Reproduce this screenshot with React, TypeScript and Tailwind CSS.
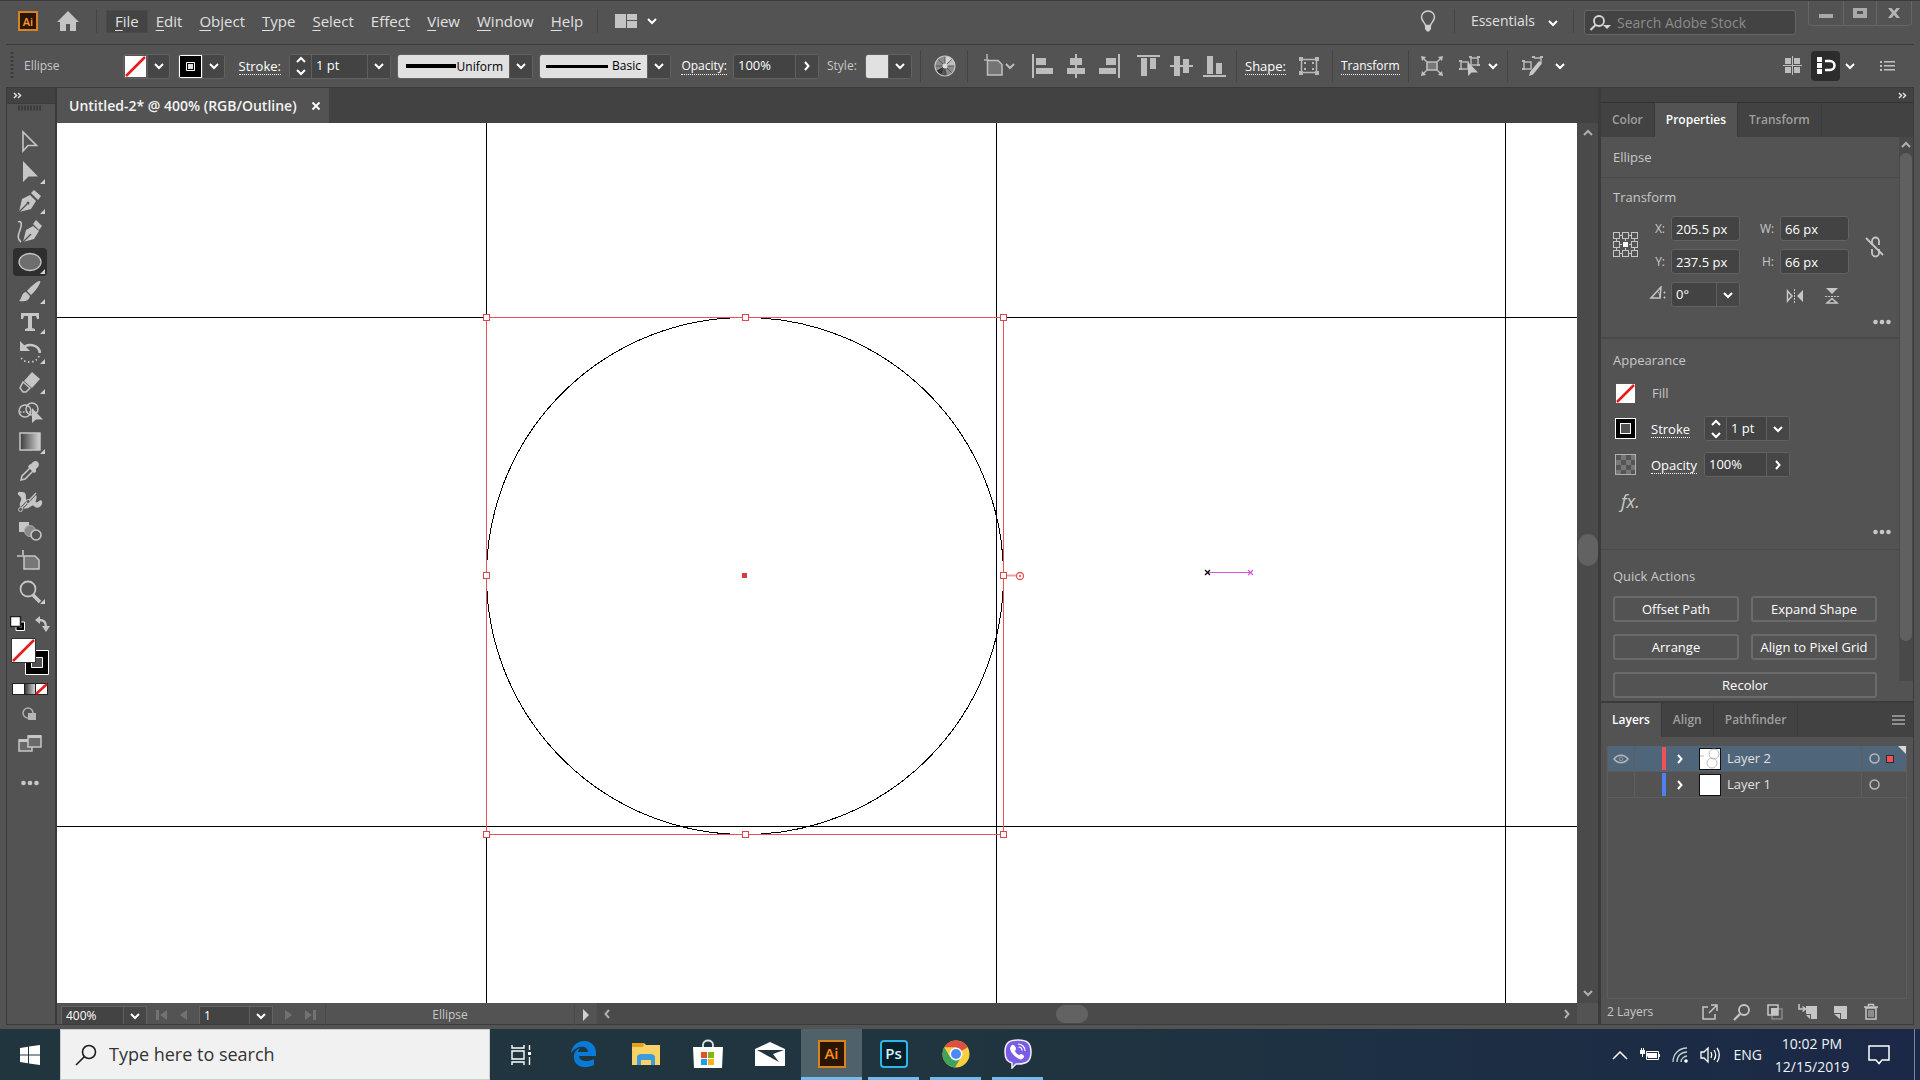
import React, { ReactNode } from "react";

const font = "font-['Open_Sans','Noto_Sans',sans-serif]";

type IconProps = { w: number; h: number; children: ReactNode; className?: string };
function Svg({ w, h, children, className = "" }: IconProps) {
  return (
    <svg width={w} height={h} viewBox={`0 0 ${w} ${h}`} fill="none" className={`shrink-0 ${className}`} aria-hidden="true">
      {children}
    </svg>
  );
}

function Down({ className = "" }: { className?: string }) {
  return (
    <Svg w={12} h={8} className={className}>
      <path d="M2 2l4 4 4-4" stroke="currentColor" strokeWidth="2" />
    </Svg>
  );
}
function Up({ className = "" }: { className?: string }) {
  return (
    <Svg w={12} h={8} className={className}>
      <path d="M2 6l4-4 4 4" stroke="currentColor" strokeWidth="2" />
    </Svg>
  );
}
function Right({ className = "" }: { className?: string }) {
  return (
    <Svg w={8} h={12} className={className}>
      <path d="M2 2l3.500 4L2 10" stroke="currentColor" strokeWidth="2" />
    </Svg>
  );
}
function Left({ className = "" }: { className?: string }) {
  return (
    <Svg w={8} h={12} className={className}>
      <path d="M6 2L2.500 6 6 10" stroke="currentColor" strokeWidth="2" />
    </Svg>
  );
}

const Sep = ({ className = "" }: { className?: string }) => <div className={`w-px shrink-0 bg-[#454545] ${className}`} />;

function DropButton({ label, children }: { label: string; children?: ReactNode }) {
  return (
    <button aria-label={label} className="flex h-full w-[23px] shrink-0 items-center justify-center border-l border-[#5f5f5f] bg-[#464646] text-white">
      {children ?? <Down />}
    </button>
  );
}

function Stepper({ label }: { label: string }) {
  return (
    <div className="flex h-full w-[22px] shrink-0 flex-col items-center justify-center gap-1 border-r border-[#5f5f5f] bg-[#464646] text-white">
      <button aria-label={`Increase ${label}`} className="h-2"><Up /></button>
      <button aria-label={`Decrease ${label}`} className="h-2"><Down /></button>
    </div>
  );
}

const field = "flex h-[25px] shrink-0 items-center overflow-hidden rounded-[3px] border border-[#626262] bg-[#434343]";

function NoneSwatch({ size }: { size: number }) {
  return (
    <Svg w={size} h={size}>
      <rect x="0.500" y="0.500" width={size - 1} height={size - 1} fill="#fff" stroke="#555" />
      <path d={`M2 ${size - 2}L${size - 2} 2`} stroke="#e31b1b" strokeWidth="2.500" />
    </Svg>
  );
}

const menus: [string, number][] = [["File", 0], ["Edit", 0], ["Object", 0], ["Type", 0], ["Select", 0], ["Effect", 4], ["View", 0], ["Window", 0], ["Help", 0]];

function MenuBar() {
  return (
    <header className="flex h-[43px] shrink-0 items-start pl-[18px] text-[#e0e0e0]">
      <div className="flex h-10 items-center">
        <div className="flex h-5 w-5 items-center justify-center border-2 border-[#d9831f] bg-[#2a1500] text-[11px] leading-none font-semibold text-[#ff9a2e]">Ai</div>
        <button aria-label="Home" className="ml-[18px]">
          <Svg w={24} h={22}>
            <path d="M12 1L1 12h3v9h6v-7h4v7h6v-9h3z" fill="#c4c4c4" />
          </Svg>
        </button>
        <Sep className="mr-2.5 ml-4 h-6" />
        <nav className="flex items-center gap-px" aria-label="Main menu">
          {menus.map(([m, i]) => (
            <button
              key={m}
              className={`h-[21px] px-2 text-[15px] leading-5 whitespace-nowrap ${m === "File" ? "bg-[#444444] outline outline-[#4a4a4a]" : ""}`}
            >
              {m.slice(0, i)}
              <span className="underline underline-offset-3">{m[i]}</span>
              {m.slice(i + 1)}
            </button>
          ))}
        </nav>
        <Sep className="mr-4 ml-1.5 h-6" />
        <button aria-label="Arrange documents" className="flex items-center gap-2 text-white">
          <Svg w={24} h={16}>
            <path d="M1 1h11v14H1z M13 1h10v6H13z M13 8h10v7H13z" fill="#c4c4c4" />
          </Svg>
          <Down />
        </button>
      </div>
      <div className="flex-1" />
      <div className="flex h-10 items-center">
        <button aria-label="Learn">
          <Svg w={16} h={22}>
            <path d="M5.500 15.500C5 12.500 1.500 11 1.500 7a6.500 6 0 0 1 13 0c0 4-3.500 5.500-4 8.500z" stroke="#d0d0d0" strokeWidth="1.500" />
            <path d="M5 16h6v3l-2 2.500H7L5 19z" fill="#d0d0d0" />
          </Svg>
        </button>
        <Sep className="mr-4 ml-[18px] h-6" />
        <button className="flex items-center gap-3 text-[14px] leading-5 text-white">
          <span className="text-[#e0e0e0]">Essentials</span>
          <Down className="mt-1" />
        </button>
        <Sep className="mr-2.5 ml-3.5 h-6" />
      </div>
      <div className="flex h-[43px] items-center">
        <label className="flex h-[25px] w-[212px] items-center gap-1 rounded-[3px] border border-[#666] bg-[#434343] pl-1">
          <Svg w={24} h={18}>
            <circle cx="10" cy="7" r="5" stroke="#d8d8d8" strokeWidth="1.800" />
            <path d="M6.500 11L1.500 16" stroke="#d8d8d8" strokeWidth="2" />
            <path d="M14 11h8l-4 4z" fill="#d8d8d8" />
          </Svg>
          <input aria-label="Search Adobe Stock" placeholder="Search Adobe Stock" className="w-44 bg-transparent text-[14px] text-white outline-none placeholder:text-[#8c8c8c]" />
        </label>
      </div>
      <div className="mr-2 ml-3 flex h-[25px] rounded-b border border-t-0 border-[#656565]">
        <button aria-label="Minimize" className="flex w-[34px] items-center justify-center">
          <Svg w={14} h={14}><path d="M0 8h14v4H0z" fill="#a9a9a9" /></Svg>
        </button>
        <button aria-label="Maximize" className="flex w-[34px] items-center justify-center border-x border-[#656565]">
          <Svg w={14} h={12}><path d="M0 1h14v10H0z M4 4v3h6V4z" fill="#a9a9a9" fillRule="evenodd" /></Svg>
        </button>
        <button aria-label="Close" className="flex w-[34px] items-center justify-center">
          <Svg w={14} h={12}><path d="M1 1h3.500L7 4l2.500-3H13L9 6l4 5H9.500L7 8l-2.500 3H1l4-5z" fill="#b4b4b4" /></Svg>
        </button>
      </div>
    </header>
  );
}

const alignShapes = [
  "M0 0h2v24H0z M4 4h10v7H4z M4 14h17v6H4z",
  "M10 0h2v24h-2z M5 4h12v7H5z M2 14h18v6H2z",
  "M20 0h2v24h-2z M8 4h10v7H8z M1 14h17v6H1z",
  "M0 1h23v2H0z M4 4h6v18H4z M13 4h6v11h-6z",
  "M0 11h23v2H0z M4 2h6v20H4z M13 5h6v14h-6z",
  "M0 21h23v2H0z M4 2h6v18H4z M13 9h6v11h-6z",
];
const alignNames = ["Align left", "Align center", "Align right", "Align top", "Align middle", "Align bottom"];

const linkText = "border-b border-dotted border-white leading-4 text-white whitespace-nowrap";

function ControlBar() {
  return (
    <div className="mx-1.5 flex h-[43px] shrink-0 items-center border-t border-[#3b3b3b] text-[13px] text-[#c8c8c8]">
      <Svg w={4} h={28} className="ml-1"><path d="M2 0v28" stroke="#3d3d3d" strokeWidth="3" strokeDasharray="2 2" /></Svg>
      <span className="ml-2.5 w-[99px] text-[12px]">Ellipse</span>
      <div className="flex h-[25px] w-[47px] items-center overflow-hidden rounded-[3px] border border-[#626262]">
        <NoneSwatch size={23} /><DropButton label="Fill" />
      </div>
      <div className="ml-2 flex h-[25px] w-[47px] items-center overflow-hidden rounded-[3px] border border-[#626262]">
        <Svg w={23} h={23}>
          <rect x="0.500" y="0.500" width="22" height="22" fill="#000" stroke="#fff" />
          <path d="M7.500 7.500h8v8h-8z" stroke="#fff" />
          <path d="M9 9h5v5H9z" fill="#ddd" />
        </Svg>
        <DropButton label="Stroke color" />
      </div>
      <div className="flex w-16 justify-end pr-2"><button className={linkText}>Stroke:</button></div>
      <div className={`${field} w-[102px]`}>
        <Stepper label="stroke weight" />
        <input aria-label="Stroke weight" defaultValue="1 pt" className="w-0 flex-1 bg-transparent pl-1 text-white outline-none" />
        <DropButton label="Stroke weight list" />
      </div>
      <div className={`${field} ml-1.5 w-[136px]`}>
        <div className="flex h-full flex-1 items-center justify-between bg-[#e1e1e1] pr-1.5 pl-2 text-[12px] text-black">
          <div className="h-1 w-[50px] bg-black" /><span className="pt-0.5">Uniform</span>
        </div>
        <DropButton label="Width profile" />
      </div>
      <div className={`${field} ml-1.5 w-[132px]`}>
        <div className="flex h-full flex-1 items-center justify-between bg-[#e1e1e1] px-1.5 text-[12px] text-black">
          <div className="h-[3px] w-[62px] bg-black" /><span>Basic</span>
        </div>
        <DropButton label="Brush definition" />
      </div>
      <div className="flex w-[62px] justify-end pr-1.5"><button className={`${linkText} text-[12px]`}>Opacity:</button></div>
      <div className={`${field} w-[86px]`}>
        <input aria-label="Opacity" defaultValue="100%" className="w-0 flex-1 bg-transparent pl-1 text-white outline-none" />
        <DropButton label="Opacity slider"><Right /></DropButton>
      </div>
      <span className="w-[46px] pl-2 text-[12px]">Style:</span>
      <div className={`${field} w-[47px]`}>
        <div className="h-full flex-1 bg-[#e1e1e1]" /><DropButton label="Graphic style" />
      </div>
      <Sep className="mx-2 h-8" />
      <button aria-label="Recolor artwork" className="flex w-8 justify-center">
        <Svg w={22} h={22}>
          <circle cx="11" cy="11" r="10" fill="#8b8b8b" />
          <path d="M11 11L11 1A10 10 0 0 1 18 4z" fill="#d5d5d5" /><path d="M11 11l7-7a10 10 0 0 1 3 7z" fill="#bcbcbc" />
          <path d="M11 11L2 16a10 10 0 0 0 5 4z" fill="#333" /><path d="M11 11l-4 9a10 10 0 0 0 6 1z" fill="#555" />
          <path d="M11 1v20M1 11h20M4 4l14 14M18 4L4 18" stroke="#4a4a4a" strokeWidth="0.800" />
          <circle cx="11" cy="11" r="10" stroke="#c4c4c4" strokeWidth="1.200" /><circle cx="11" cy="11" r="2.500" fill="#ddd" />
        </Svg>
      </button>
      <Sep className="ml-1.5 h-8" />
      <button aria-label="Align to artboard" className="ml-4 flex items-center">
        <Svg w={20} h={24}>
          <path d="M0 6h5M3 0v5" stroke="#b8b8b8" strokeWidth="1.500" />
          <path d="M3.500 6.500H14l4 4V21H3.500z" fill="#747474" stroke="#c0c0c0" strokeWidth="1.500" />
        </Svg>
        <Down className="text-[#bcbcbc]" />
      </button>
      <div className="ml-4 flex items-center gap-2.5">
        {alignShapes.slice(0, 3).map((d, i) => (
          <button key={d} aria-label={alignNames[i]}><Svg w={23} h={24}><path d={d} fill="#bdbdbd" /></Svg></button>
        ))}
      </div>
      <div className="ml-4 flex items-center gap-2.5">
        {alignShapes.slice(3).map((d, i) => (
          <button key={d} aria-label={alignNames[i + 3]}><Svg w={23} h={24}><path d={d} fill="#bdbdbd" /></Svg></button>
        ))}
      </div>
      <Sep className="mr-2 ml-2.5 h-8" />
      <button className={linkText}>Shape:</button>
      <button aria-label="Shape properties" className="ml-3">
        <Svg w={22} h={20}>
          <path d="M3.500 3.500h15v13h-15z" stroke="#b8b8b8" strokeWidth="1.500" />
          <path d="M1 1h4v4H1z M17 1h4v4h-4z M1 15h4v4H1z M17 15h4v4h-4z M6 6h2v2H6z M14 6h2v2h-2z M6 12h2v2H6z M14 12h2v2h-2z" fill="#b8b8b8" />
        </Svg>
      </button>
      <Sep className="mr-2 ml-3 h-8" />
      <button className={`${linkText} text-[12px]`}>Transform</button>
      <Sep className="mr-3 ml-2 h-8" />
      <button aria-label="Isolate selected object">
        <Svg w={22} h={20}>
          <path d="M6 6h10v8H6z" fill="#777" stroke="#c0c0c0" strokeWidth="1.600" />
          <path d="M0 0l5 1-1.500 1.500L6 5 5 6 2.500 3.500 1 5z M22 0l-5 1 1.500 1.500L16 5l1 1 2.500-2.500L21 5z M0 20l5-1-1.500-1.500L6 15l-1-1-2.500 2.500L1 15z M22 20l-5-1 1.500-1.500L16 15l1-1 2.500 2.500L21 15z" fill="#c0c0c0" />
        </Svg>
      </button>
      <button aria-label="Select similar objects" className="ml-4 flex items-center gap-1.5 text-white">
        <Svg w={22} h={22}>
          <path d="M2 7h7v7H2z M12 3h7v7h-7z" stroke="#b8b8b8" strokeWidth="1.500" />
          <path d="M10 1h3v2h-3z M18 1h3v2h-3z M18 9h3v2h-3z M0 5h3v2H0z M0 13h3v2H0z" fill="#b8b8b8" />
          <path d="M9 7v14l3.500-3.500H19z" fill="#c8c8c8" />
        </Svg>
        <Down />
      </button>
      <Sep className="mr-3.5 ml-2 h-8" />
      <button aria-label="Edit similar shapes together" className="flex items-center gap-2.5 text-white">
        <Svg w={22} h={22}>
          <path d="M2 7h7v7H2z M12 3h7v5" stroke="#b8b8b8" strokeWidth="1.500" />
          <path d="M10 1h3v2h-3z M18 1h3v2h-3z M0 5h3v2H0z M0 13h3v2H0z" fill="#b8b8b8" />
          <path d="M17 6l3 2.500-9 11L7 21l1-4z" fill="#c8c8c8" />
        </Svg>
        <Down />
      </button>
      <div className="flex-1" />
      <button aria-label="Snap to grid">
        <Svg w={20} h={20}>
          <path d="M2 2h6v6H2z M11 2h6v6h-6z M2 11h6v6H2z M11 11h6v6h-6z M9 0h1v19H9z M0 9h19v1H0z" fill="#bdbdbd" />
        </Svg>
      </button>
      <button aria-label="Snap to point" className="ml-2 flex h-[30px] w-[29px] items-center justify-center rounded-sm bg-[#2c2c2c]">
        <Svg w={20} h={20}>
          <path d="M1 1h5v5H1z M1 7h5v5H1z M1 13h5v5H1z" fill="#fff" />
          <path d="M9 5h5a4 4 0 0 1 0 9H9" stroke="#fff" strokeWidth="2.500" />
        </Svg>
      </button>
      <button aria-label="Snap options" className="ml-1 text-white"><Down /></button>
      <button aria-label="Control panel menu" className="mr-[18px] ml-6">
        <Svg w={16} h={12}>
          <path d="M0 1h2v2H0z M4 1h11v1.500H4z M0 5h2v2H0z M4 5h11v1.500H4z M0 9h2v2H0z M4 9h11v1.500H4z" fill="#c0c0c0" />
        </Svg>
      </button>
    </div>
  );
}

const c = "#c6c6c6";
const tools: { name: string; flyout?: boolean; art: ReactNode }[] = [
  { name: "Selection", art: <path d="M6 3v19l5-5.500h8.500z" stroke={c} strokeWidth="1.600" /> },
  { name: "Direct Selection", flyout: true, art: <path d="M6 2v21l5.500-5.500H21z" fill={c} /> },
  {
    name: "Pen", flyout: true,
    art: <><path d="M2 23l3-13 8-4 6 6-5 8z" fill={c} /><path d="M14 4l3-3 7 6-3 4z" fill={c} /><path d="M2 23l8-8" stroke="#535353" strokeWidth="1.300" /><circle cx="11" cy="14" r="1.500" fill="#535353" /></>,
  },
  {
    name: "Curvature",
    art: <><path d="M6 23l3-12 7-4 6 5-5 8z" fill={c} /><path d="M16 5l3-4 6 6-3 4z" fill={c} /><path d="M6 23l8-8" stroke="#535353" strokeWidth="1.300" /><path d="M1 3c4-2 4 3 2 8S0 20 4 23" stroke={c} strokeWidth="1.600" /></>,
  },
  { name: "Ellipse", flyout: true, art: <ellipse cx="13" cy="13" rx="11" ry="8.500" fill="#6e6e6e" stroke={c} strokeWidth="1.300" /> },
  {
    name: "Paintbrush", flyout: true,
    art: <><path d="M23 2c2 1-6 12-9 14l-4-4C13 8 21 1 23 2z" fill={c} /><path d="M9 13l4 4c-1 5-6 6-11 5 3-2 2-8 7-9z" fill={c} /></>,
  },
  { name: "Type", flyout: true, art: <path d="M4 4h18v6h-2l-1-3h-4v12l3 1v2H8v-2l3-1V7H7l-1 3H4z" fill={c} /> },
  {
    name: "Rotate", flyout: true,
    art: <><path d="M6 9c4-5 16-4 17 5" stroke={c} strokeWidth="2.500" /><path d="M3 2v10h10z" fill={c} /><path d="M22 17c-2 7-15 9-19 0" stroke={c} strokeWidth="1.800" strokeDasharray="1.500 2.500" /></>,
  },
  {
    name: "Eraser", flyout: true,
    art: <><path d="M15 3l8 7-8 9-8-7z" fill={c} /><path d="M6 13l7 6-4 4H6l-3-4z" stroke={c} strokeWidth="1.500" /></>,
  },
  {
    name: "Shape Builder",
    art: <><circle cx="8" cy="12" r="6" stroke={c} strokeWidth="1.500" /><circle cx="15" cy="10" r="6" stroke={c} strokeWidth="1.500" /><path d="M3 13h13" stroke={c} strokeWidth="1.500" strokeDasharray="1.500 1.500" /><path d="M15 9v15l4-3.500h7z" fill={c} /></>,
  },
  { name: "Gradient", flyout: true, art: <rect x="3" y="4" width="20" height="17" fill="url(#toolGradient)" stroke={c} strokeWidth="1.500" /> },
  {
    name: "Eyedropper",
    art: <><path d="M4 21l1-4 9-9 3 3-9 9z" stroke={c} strokeWidth="1.500" /><path d="M12 6l2-1 2-2c3-3 8 1 5 5l-2 2v3l-2 1-6-6z" fill={c} /></>,
  },
  {
    name: "Width",
    art: (
      <>
        <path d="M5 3c4 0 4 3 4 6s1 4 3 3 3-6 6-6c2 0 2 2 1 5s1 3 3 1 4 0 3 3-5 5-7 3-2-2-5 0-9 3-10-1 2-5 1-8-4-3-3-5 2-1 4-1z" fill={c} />
        <path d="M3 21L18 5" stroke="#535353" strokeWidth="3" /><path d="M3 21L19 4" stroke={c} strokeWidth="1.300" />
        <circle cx="3.500" cy="20.500" r="2" fill="#535353" stroke={c} /><circle cx="11" cy="12.500" r="2" fill="#535353" stroke={c} />
      </>
    ),
  },
  {
    name: "Blend",
    art: <><path d="M2 3h10v10H2z" fill={c} /><circle cx="13" cy="12" r="5.500" fill="#8a8a8a" stroke="#aaa" /><circle cx="19" cy="16" r="5" fill="#535353" stroke={c} strokeWidth="1.600" /></>,
  },
  { name: "Artboard", art: <><path d="M0 7h7M6 1v5" stroke={c} strokeWidth="1.600" /><path d="M7 7h11l4 4v9H7z" fill="#777" stroke={c} strokeWidth="1.500" /></> },
  { name: "Zoom", flyout: true, art: <><circle cx="11" cy="10" r="7.500" stroke={c} strokeWidth="1.800" /><path d="M16 16l7 7" stroke={c} strokeWidth="3.500" /></> },
];

function ToolsPanel() {
  return (
    <aside className="flex w-[51px] shrink-0 flex-col border-r-2 border-l border-[#3b3b3b]">
      <div className="flex h-4 shrink-0 items-center border-b border-[#3b3b3b] bg-[#424242] pl-1.5">
        <Svg w={9} h={7}><path d="M1 1l2.500 2.500L1 6M5 1l2.500 2.500L5 6" stroke="#ddd" strokeWidth="1.500" /></Svg>
      </div>
      <div className="flex h-6 shrink-0 justify-center pt-px pr-0.5">
        <Svg w={24} h={6}><path d="M0 3h24" stroke="#3c3c3c" strokeWidth="5" strokeDasharray="2 1" /></Svg>
      </div>
      <svg width="0" height="0" className="absolute" aria-hidden="true">
        <defs><linearGradient id="toolGradient"><stop stopColor="#3a3a3a" /><stop offset="1" stopColor="#d4d4d4" /></linearGradient></defs>
      </svg>
      <div className="flex flex-col items-center gap-0.5 pr-0.5">
        {tools.map((t) => (
          <button
            key={t.name}
            aria-label={`${t.name} Tool`}
            className={`relative flex h-7 w-[34px] shrink-0 items-center justify-center rounded-sm ${t.name === "Ellipse" ? "bg-[#2e2e2e]" : ""}`}
          >
            <Svg w={26} h={26}>{t.art}</Svg>
            {t.flyout && (
              <Svg w={5} h={5} className="absolute right-0.5 bottom-0.5"><path d="M5 0v5H0z" fill="#d0d0d0" /></Svg>
            )}
          </button>
        ))}
      </div>
      <div className="flex flex-col items-center pt-2.5 pr-0.5">
        <div className="flex w-10 items-center justify-between">
          <button aria-label="Default fill and stroke">
            <Svg w={16} h={16}>
              <path d="M6 6h8.500v8.500H6z" stroke="#fff" strokeWidth="1" fill="#000" /><path d="M9 9h3v3H9z" fill="#555" />
              <path d="M0.500 0.500h10v10h-10z" fill="#fff" stroke="#222" strokeWidth="1.500" />
            </Svg>
          </button>
          <button aria-label="Swap fill and stroke">
            <Svg w={15} h={16}><path d="M4 4c5 0 7 2 7 7" stroke={c} strokeWidth="2.500" /><path d="M5 0v8L0 4z M7 10h8l-4 6z" fill={c} /></Svg>
          </button>
        </div>
        <button aria-label="Fill and stroke" className="mt-1.5">
          <Svg w={38} h={37}>
            <path d="M14.500 12.500h23v24h-23z" fill="#000" stroke="#fff" /><path d="M20.500 19.500h11v10h-11z" fill="#535353" stroke="#fff" />
            <path d="M0.500 0.500h24v24h-24z" fill="#fff" stroke="#333" /><path d="M2 23L23 2" stroke="#e31b1b" strokeWidth="2.500" />
          </Svg>
        </button>
        <button aria-label="Color, gradient or none" className="mt-2">
          <Svg w={36} h={12}>
            <rect width="36" height="12" fill="#222" /><rect x="1" y="1" width="11" height="10" fill="#fff" />
            <rect x="13" y="1" width="10" height="10" fill="url(#toolGradient)" /><rect x="24" y="1" width="11" height="10" fill="#fff" />
            <path d="M24 11L35 1" stroke="#e31b1b" strokeWidth="2.500" />
          </Svg>
        </button>
        <button aria-label="Drawing mode" className="mt-3">
          <Svg w={16} h={15}><circle cx="6" cy="6" r="5" stroke="#b0b0b0" strokeWidth="1.500" /><path d="M6 6h8v7H6z" fill="#b5b5b5" /></Svg>
        </button>
        <button aria-label="Screen mode" className="mt-3">
          <Svg w={24} h={18}>
            <path d="M1 6h13v11H1z" fill="#6a6a6a" stroke={c} strokeWidth="1.500" /><path d="M1 5h13v3H1z" fill={c} />
            <path d="M10 2h13v11H10z" fill="#6a6a6a" stroke={c} strokeWidth="1.500" /><path d="M10 1h13v3H10z" fill={c} />
          </Svg>
        </button>
        <button aria-label="Edit toolbar" className="mt-7"><Dots /></button>
      </div>
    </aside>
  );
}

function Dots() {
  return (
    <Svg w={18} h={6}><circle cx="2.500" cy="3" r="2.300" fill="#c8c8c8" /><circle cx="9" cy="3" r="2.300" fill="#c8c8c8" /><circle cx="15.500" cy="3" r="2.300" fill="#c8c8c8" /></Svg>
  );
}

const handles: [number, number][] = [[429, 194], [688, 194], [946, 194], [429, 452], [946, 452], [429, 711], [688, 711], [946, 711]];

function Artwork() {
  return (
    <svg className="h-full w-full bg-white" fill="none" role="img" aria-label="Artboard with a selected ellipse">
      <g stroke="#000" shapeRendering="crispEdges">
        <line x1="429.500" y1="0" x2="429.500" y2="100%" />
        <line x1="939.500" y1="0" x2="939.500" y2="100%" />
        <line x1="1448.500" y1="0" x2="1448.500" y2="100%" />
        <line x1="0" y1="194.500" x2="100%" y2="194.500" />
        <line x1="0" y1="703.500" x2="100%" y2="703.500" />
      </g>
      <circle cx="688" cy="453" r="258.500" stroke="#000" shapeRendering="crispEdges" />
      <rect x="429.500" y="194.500" width="517" height="517" stroke="#e0565b" shapeRendering="crispEdges" />
      <path d="M949 452.500h10" stroke="#f0a0a0" strokeWidth="2" />
      {handles.map(([x, y]) => (
        <rect key={`${x}-${y}`} x={x - 2.5} y={y - 2.5} width="6" height="6" fill="#fff" stroke="#d9484e" />
      ))}
      <rect x="685" y="450" width="5" height="5" fill="#d9383e" />
      <circle cx="963" cy="453" r="3.500" stroke="#e0565b" strokeWidth="1.300" fill="#fff" />
      <circle cx="963" cy="453" r="1" fill="#d9383e" />
      <path d="M1150 449.500h43" stroke="#d456d4" />
      <path d="M1148 447l5 5M1153 447l-5 5" stroke="#000" strokeWidth="1.200" />
      <path d="M1191 447l5 5M1196 447l-5 5" stroke="#d456d4" strokeWidth="1.200" />
    </svg>
  );
}

function StatusBar() {
  const nav = "flex h-full w-[22px] items-center justify-center";
  return (
    <div className="flex h-[21px] shrink-0 items-center bg-[#535353] pl-1 text-[12px] text-[#c8c8c8]">
      <div className="flex h-full min-w-0 items-center pt-[3px]">
        <div className="flex h-full w-[86px] items-center overflow-hidden border border-b-0 border-[#626262] bg-[#434343]">
          <input aria-label="Zoom level" defaultValue="400%" className="w-0 flex-1 bg-transparent pl-1 text-white outline-none" />
          <DropButton label="Zoom levels" />
        </div>
        <div className="flex h-full px-1 text-[#727272]">
          <button aria-label="First artboard" className={nav}><Svg w={12} h={12}><path d="M0 1h3v10H0z M11 1v10L4 6z" fill="currentColor" /></Svg></button>
          <button aria-label="Previous artboard" className={nav}><Svg w={8} h={12}><path d="M7 1v10L0 6z" fill="currentColor" /></Svg></button>
        </div>
        <div className="flex h-full w-[74px] items-center overflow-hidden border border-b-0 border-[#626262] bg-[#434343]">
          <input aria-label="Artboard number" defaultValue="1" className="w-0 flex-1 bg-transparent pl-1 text-white outline-none" />
          <DropButton label="Artboards" />
        </div>
        <div className="flex h-full px-1 text-[#727272]">
          <button aria-label="Next artboard" className={nav}><Svg w={8} h={12}><path d="M1 1v10l7-5z" fill="currentColor" /></Svg></button>
          <button aria-label="Last artboard" className={nav}><Svg w={12} h={12}><path d="M9 1h3v10H9z M1 1v10l7-5z" fill="currentColor" /></Svg></button>
        </div>
        <div className="w-[250px] border-x border-[#484848] text-center leading-5">Ellipse</div>
        <button aria-label="Status options" className={nav}><Svg w={8} h={12}><path d="M1 0v12l6-6z" fill="#d0d0d0" /></Svg></button>
      </div>
      <div className="flex h-full flex-1 items-center bg-[#4a4a4a] px-1.5 text-[#b0b0b0]">
        <button aria-label="Scroll left"><Left /></button>
        <div className="flex flex-1 justify-center pr-[30px]"><div className="h-[18px] w-8 rounded-full bg-[#626262]" /></div>
        <button aria-label="Scroll right"><Right /></button>
      </div>
      <div className="h-full w-[21px] bg-[#535353]" />
    </div>
  );
}

function Document() {
  return (
    <main className="flex min-w-0 flex-1 flex-col">
      <div className="flex h-[35px] shrink-0 bg-[#424242]">
        <div className="flex items-center gap-3.5 bg-[#535353] pr-2 pl-3 text-[14px] font-semibold text-[#f4f4f4]">
          <span className="whitespace-nowrap">Untitled-2* @ 400% (RGB/Outline)</span>
          <button aria-label="Close document"><Svg w={10} h={10}><path d="M1.500 1.500l7 7M8.500 1.500l-7 7" stroke="#fff" strokeWidth="1.800" /></Svg></button>
        </div>
      </div>
      <div className="flex min-h-0 flex-1">
        <div className="min-w-0 flex-1 overflow-hidden"><Artwork /></div>
        <div className="flex w-[21px] shrink-0 flex-col items-center bg-[#4a4a4a] py-1.5 text-[#b0b0b0]">
          <button aria-label="Scroll up"><Up /></button>
          <div className="flex flex-1 flex-col justify-center pb-[26px]"><div className="h-8 w-5 rounded-full bg-[#626262]" /></div>
          <button aria-label="Scroll down"><Down /></button>
        </div>
      </div>
      <StatusBar />
    </main>
  );
}

function Tabs({ items, active }: { items: string[]; active: string }) {
  return (
    <div role="tablist" className="flex h-full">
      {items.map((t) => (
        <button
          key={t}
          role="tab"
          aria-selected={t === active}
          className={`border-r border-[#3b3b3b] px-[11px] text-[12px] font-semibold ${t === active ? "bg-[#535353] text-white" : "text-[#9f9f9f]"}`}
        >
          {t}
        </button>
      ))}
    </div>
  );
}

function NumField({ id, label, value }: { id: string; label: string; value: string }) {
  return (
    <div className="flex items-center">
      <label htmlFor={id} className="w-5 pr-1.5 text-right text-[12px]">{label}</label>
      <input id={id} defaultValue={value} className="h-[25px] w-[69px] rounded-[3px] border border-[#626262] bg-[#434343] pl-1 text-[13px] text-white outline-none" />
    </div>
  );
}

const actionButton = "h-[26px] rounded-[3px] border-2 border-[#6b6b6b] text-[13px] leading-5 text-white";

function PropertiesPanel() {
  return (
    <section className="flex min-h-0 flex-1 flex-col overflow-hidden">
      <div className="h-[34px] shrink-0 bg-[#424242]"><Tabs items={["Color", "Properties", "Transform"]} active="Properties" /></div>
      <div className="flex min-h-0 flex-1">
        <div className="min-w-0 flex-1 text-[13px] text-[#c8c8c8]">
          <div className="flex h-[41px] items-center border-b border-[#4a4a4a] pt-0.5 pl-3"><h2>Ellipse</h2></div>
          <div className="h-[161px] border-b-2 border-[#4a4a4a] pt-2.5 pl-3">
            <h2 className="leading-4.5">Transform</h2>
            <div className="mt-2.5 flex items-start">
              <button aria-label="Reference point" className="mt-4">
                <Svg w={26} h={26}>
                  <path d="M3.500 3.500h18v18h-18z M12.500 3.500v18M3.500 12.500h18" stroke={c} />
                  {[0, 9, 18].map((y) => [0, 9, 18].map((x) => (
                    <rect key={`${x}-${y}`} x={x + 0.5} y={y + 0.5} width="6" height="6" fill={x === 9 && y === 9 ? "#fff" : "#535353"} stroke={x === 9 && y === 9 ? "#535353" : c} />
                  )))}
                </Svg>
              </button>
              <div className="ml-3 flex flex-col gap-2">
                <NumField id="x" label="X:" value="205.5 px" />
                <NumField id="y" label="Y:" value="237.5 px" />
                <div className="flex items-center">
                  <span className="flex w-5 justify-end pr-1 pb-1">
                    <Svg w={18} h={14}><path d="M12 1L2 12h9z" stroke={c} strokeWidth="1.500" /><path d="M8 5c2 1 3 4 3 7M15 6h1v1h-1z M15 11h1v1h-1z" stroke={c} /></Svg>
                  </span>
                  <div className={`${field} w-[69px]`}>
                    <input aria-label="Rotate" defaultValue="0°" className="w-0 flex-1 bg-transparent pl-1 text-white outline-none" />
                    <DropButton label="Rotation list" />
                  </div>
                </div>
              </div>
              <div className="ml-5 flex flex-col gap-2">
                <NumField id="w" label="W:" value="66 px" />
                <NumField id="h" label="H:" value="66 px" />
                <div className="flex gap-5 pt-1.5 pl-[26px]">
                  <button aria-label="Flip horizontally">
                    <Svg w={18} h={16}><path d="M1.500 3v10L6 8z" stroke={c} strokeWidth="1.500" /><path d="M17 2v12l-6-6z" fill={c} /><path d="M8.500 1v14" stroke={c} strokeDasharray="2 1" /></Svg>
                  </button>
                  <button aria-label="Flip vertically">
                    <Svg w={16} h={16}><path d="M3 15h10L8 10.500z" stroke={c} strokeWidth="1.500" /><path d="M2 0h12L8 6z" fill={c} /><path d="M1 8.500h14" stroke={c} strokeDasharray="2 1" /></Svg>
                  </button>
                </div>
              </div>
              <button aria-label="Constrain width and height" className="mt-5 ml-4">
                <Svg w={20} h={22}>
                  <path d="M7 9V5a3.500 3.500 0 0 1 7 0v4M7 13v4a3.500 3.500 0 0 0 7 0v-4" stroke={c} strokeWidth="1.800" /><path d="M1 2l17 17" stroke={c} strokeWidth="1.800" />
                </Svg>
              </button>
            </div>
            <div className="mt-3 flex justify-end pr-2"><button aria-label="More transform options" className="flex"><Dots /></button></div>
          </div>
          <div className="h-[211px] border-b border-[#4a4a4a] pt-3 pl-3">
            <h2 className="leading-4.5">Appearance</h2>
            <div className="mt-3.5 flex h-[21px] items-center gap-4 pl-0.5"><NoneSwatch size={21} /><span>Fill</span></div>
            <div className="mt-3 flex h-[25px] items-center pl-0.5">
              <Svg w={21} h={21}>
                <rect x="0.500" y="0.500" width="20" height="20" fill="#000" stroke="#fff" />
                <rect x="5.500" y="5.500" width="10" height="10" fill="#535353" stroke="#fff" />
              </Svg>
              <div className="w-[68px] pt-0.5 pl-[15px]"><button className={linkText}>Stroke</button></div>
              <div className={`${field} w-[86px]`}>
                <Stepper label="appearance stroke" />
                <input aria-label="Appearance stroke weight" defaultValue="1 pt" className="w-0 flex-1 bg-transparent pl-1 text-white outline-none" />
                <DropButton label="Appearance stroke list" />
              </div>
            </div>
            <div className="mt-[11px] flex h-[25px] items-center pl-0.5">
              <Svg w={21} h={21}>
                <rect x="0.500" y="0.500" width="20" height="20" fill="#777" stroke="#b0b0b0" />
                <path d="M1 1h5v5H1z M11 1h5v5h-5z M6 6h5v5H6z M16 6h4v5h-4z M1 11h5v5H1z M11 11h5v5h-5z M6 16h5v4H6z M16 16h4v4h-4z" fill="#555" />
              </Svg>
              <div className="w-[68px] pt-0.5 pl-[15px]"><button className={linkText}>Opacity</button></div>
              <div className={`${field} w-[86px]`}>
                <input aria-label="Appearance opacity" defaultValue="100%" className="w-0 flex-1 bg-transparent pl-1 text-white outline-none" />
                <DropButton label="Appearance opacity slider"><Right /></DropButton>
              </div>
            </div>
            <button aria-label="Effects" className="mt-3 ml-2 block text-[18px] leading-6 italic">fx.</button>
            <div className="mt-4 flex justify-end pr-2"><button aria-label="More appearance options" className="flex"><Dots /></button></div>
          </div>
          <div className="pt-4 pr-[22px] pl-3">
            <h2 className="leading-5">Quick Actions</h2>
            <div className="mt-2.5 grid grid-cols-2 gap-x-3 gap-y-3">
              <button className={actionButton}>Offset Path</button>
              <button className={actionButton}>Expand Shape</button>
              <button className={actionButton}>Arrange</button>
              <button className={`${actionButton} whitespace-nowrap`}>Align to Pixel Grid</button>
              <button className={`${actionButton} col-span-2`}>Recolor</button>
            </div>
          </div>
        </div>
        <div className="mb-5 flex w-[14px] shrink-0 flex-col items-center bg-[#494949] text-[#b0b0b0]">
          <button aria-label="Scroll panel up" className="h-4"><Up /></button>
          <div className="mb-10 w-3 flex-1 rounded-md bg-[#606060]" />
        </div>
      </div>
    </section>
  );
}

function LayerRow({ name, color, selected }: { name: string; color: string; selected?: boolean }) {
  return (
    <li className={`relative flex h-[26px] items-center border-b border-[#5d5d5d] text-[13px] text-[#e0e0e0] ${selected ? "bg-[#4f6579]" : ""}`}>
      <button aria-label={`Toggle visibility of ${name}`} className="flex h-full w-[27px] items-center justify-center border-r border-[#5d5d5d]">
        {selected && <Svg w={16} h={10}><path d="M1 5c4-5 10-5 14 0-4 5-10 5-14 0z" stroke="#b8b8b8" strokeWidth="1.400" /><circle cx="8" cy="5" r="1.800" stroke="#999" /></Svg>}
      </button>
      <button aria-label={`Lock ${name}`} className="h-full w-[27px]" />
      <span className={`h-[23px] w-1 ${color}`} />
      <button aria-label={`Expand ${name}`} className="ml-2.5 text-white"><Right /></button>
      <Svg w={22} h={22} className="ml-[15px]">
        <rect x="0.500" y="0.500" width="21" height="21" fill="#fff" stroke="#111" />
        {selected && <><circle cx="15" cy="6" r="5" stroke="#aaa" strokeWidth="0.800" /><circle cx="13" cy="15" r="5" stroke="#aaa" strokeWidth="0.800" /><path d="M1 8h4" stroke="#bbb" /></>}
      </Svg>
      <span className="flex-1 pl-1.5">{name}</span>
      <div className="flex h-full w-[45px] items-center gap-1.5 border-l border-[#5d5d5d] pl-[7px]">
        <button aria-label={`Target ${name}`}><Svg w={11} h={11}><circle cx="5.500" cy="5.500" r="4.500" stroke="#b8b8b8" strokeWidth="1.500" /></Svg></button>
        {selected && <span className="h-2 w-2 border border-[#2b2b2b] bg-[#f25055]" />}
      </div>
      {selected && <Svg w={8} h={8} className="absolute top-0 right-0"><path d="M0 0h8v8z" fill="#d8d8d8" /></Svg>}
    </li>
  );
}

function LayersPanel() {
  return (
    <section className="flex h-[323px] shrink-0 flex-col border-t-2 border-[#3b3b3b]">
      <div className="flex h-[34px] shrink-0 items-center justify-between bg-[#424242] pr-2">
        <Tabs items={["Layers", "Align", "Pathfinder"]} active="Layers" />
        <button aria-label="Layers panel menu"><Svg w={13} h={10}><path d="M0 1h13M0 5h13M0 9h13" stroke="#a8a8a8" strokeWidth="1.500" /></Svg></button>
      </div>
      <ul className="mx-1.5 mt-[9px] min-h-0 flex-1 border border-t-0 border-[#5d5d5d]">
        <LayerRow name="Layer 2" color="bg-[#f25055]" selected />
        <LayerRow name="Layer 1" color="bg-[#4f7df2]" />
      </ul>
      <div className="flex h-[25px] shrink-0 items-center pl-1.5 text-[12px] text-[#c8c8c8]">
        <span className="w-[94px]">2 Layers</span>
        <div className="flex flex-1 items-center justify-between pr-[34px]">
          <button aria-label="Collect for export"><Svg w={18} h={18}><path d="M7 4H2v12h12v-5" stroke={c} strokeWidth="1.500" /><path d="M8 10l7-7M10 2h6v6" stroke={c} strokeWidth="1.500" /></Svg></button>
          <button aria-label="Locate object"><Svg w={18} h={18}><circle cx="11" cy="7" r="5" stroke={c} strokeWidth="1.800" /><path d="M7 11l-6 6" stroke={c} strokeWidth="2.300" /></Svg></button>
          <button aria-label="Make clipping mask"><Svg w={18} h={18}><path d="M6 6h10v10H6z" stroke="#888" strokeWidth="1.500" /><path d="M2 2h10v10H2z" stroke={c} strokeWidth="1.500" /><path d="M5 5h7v7H5z" fill={c} /></Svg></button>
          <button aria-label="Create new sublayer"><Svg w={20} h={18}><path d="M8 3h11v13h-6v-5H8z M8 12h4v4z" fill={c} /><path d="M1 1v5h6M4.500 3.500L7.500 6 4.500 8.500" stroke={c} strokeWidth="1.500" /></Svg></button>
          <button aria-label="Create new layer"><Svg w={16} h={18}><path d="M1 3h13v13H8v-6H1z M1 11h6v5z" fill={c} /></Svg></button>
          <button aria-label="Delete selection"><Svg w={16} h={18}><path d="M3 5h10v11H3zM1 4h14M5.500 3V1.500h5V3" stroke={c} strokeWidth="1.500" /><path d="M6 7v7M8 7v7M10 7v7" stroke={c} /></Svg></button>
        </div>
      </div>
    </section>
  );
}

function RightDock() {
  return (
    <aside className="flex w-[316px] shrink-0 flex-col border-r border-l-3 border-[#3b3b3b]">
      <div className="flex h-[15px] shrink-0 items-center justify-end border-b border-[#333] bg-[#424242] pr-1.5">
        <Svg w={9} h={7}><path d="M1 1l2.500 2.500L1 6M5 1l2.500 2.500L5 6" stroke="#ddd" strokeWidth="1.500" /></Svg>
      </div>
      <PropertiesPanel />
      <LayersPanel />
    </aside>
  );
}

function AdobeIcon({ label, cls }: { label: string; cls: string }) {
  return <span className={`flex h-7 w-7 items-center justify-center border-2 text-[15px] leading-none font-semibold ${cls}`}>{label}</span>;
}

const apps: { name: string; state?: "active" | "open"; icon: ReactNode }[] = [
  {
    name: "Microsoft Edge",
    icon: <Svg w={28} h={28}><path d="M1 13C2 5 8 1 14 1c8 0 12 6 12 12v3H9c0 5 8 7 15 3v6c-10 5-21 1-20-9 0-4 3-7 6-8-1 1-2 3-2 4h10c0-6-10-8-17 1z" fill="#0a7ad8" /></Svg>,
  },
  {
    name: "File Explorer",
    icon: <Svg w={28} h={26}><path d="M0 2h12l2 2h14v20H0z" fill="#f8d167" /><path d="M0 2h12l-1 4H0z" fill="#dfa11e" /><path d="M5 24V15l3-2h12l3 2v9h-4v-5H9v5z" fill="#3d9adb" /></Svg>,
  },
  {
    name: "Microsoft Store",
    icon: <Svg w={30} h={30}><path d="M10 8V6c0-6 10-6 10 0v2" stroke="#dfe5e8" strokeWidth="1.800" /><path d="M0 8h30l-1 21H1z" fill="#fff" /><path d="M8 13h6v6H8z" fill="#e8502a" /><path d="M15 13h6v6h-6z" fill="#7db912" /><path d="M8 20h6v6H8z" fill="#1e9fe0" /><path d="M15 20h6v6h-6z" fill="#f8b514" /></Svg>,
  },
  {
    name: "Mail",
    icon: <Svg w={30} h={26}><path d="M0 8l15-7 15 7v17H0z" fill="#fff" /><path d="M2 9l22 12-6-8 11-4z" fill="#20353e" /></Svg>,
  },
  { name: "Adobe Illustrator", state: "active", icon: <AdobeIcon label="Ai" cls="border-[#d9831f] bg-[#2a1500] text-[#ff8a1e]" /> },
  { name: "Adobe Photoshop", state: "open", icon: <AdobeIcon label="Ps" cls="rounded-[4px] border-[#2fb6e8] bg-[#06202c] text-[#d5f2ff]" /> },
  {
    name: "Google Chrome", state: "open",
    icon: (
      <Svg w={28} h={28}>
        <circle cx="14" cy="14" r="13.500" fill="#f9cf3f" />
        <path d="M14 14L2.300 7.250A13.500 13.500 0 0 1 25.700 7.250z M2.300 7.250L14 14V7.250z M14 7h11.600L14 14z" fill="#dd4f41" />
        <path d="M2.300 7.250A13.500 13.500 0 0 0 13 27.500L19 17 14 14 8 17z" fill="#3fa35c" />
        <circle cx="14" cy="14" r="6.500" fill="#fff" /><circle cx="14" cy="14" r="5" fill="#4a8af4" />
      </Svg>
    ),
  },
  {
    name: "Viber", state: "open",
    icon: (
      <Svg w={28} h={30}>
        <path d="M14 1c9 0 13 3 13 12s-4 12-13 12h-2l-4 4v-5c-5-1-7-4-7-11C1 4 5 1 14 1z" fill="#7a5ce6" stroke="#f3f0fc" strokeWidth="1.500" />
        <path d="M8 6c2-1 4 2 4 4 0 1-1 1-1 2s3 4 4 4 1-1 2-1 4 2 3 3c-1 2-3 3-5 2-4-2-8-6-9-10 0-2 1-3 2-4z" fill="#fff" />
        <path d="M14 5c4 0 7 3 7 7M14.500 8c2 0 3.500 1.500 3.500 3.500" stroke="#fff" strokeWidth="1.200" />
      </Svg>
    ),
  },
];

function Taskbar() {
  return (
    <footer className="flex h-[51px] shrink-0 bg-linear-to-r from-[#20353e] via-[#20353f] to-[#1b2847] text-[#f0f3f5]">
      <button aria-label="Start" className="flex w-[60px] items-center justify-center">
        <Svg w={20} h={20}><path d="M0 3l8-1.200V9.500H0z M9 1.600L20 0v9.500H9z M0 10.500h8v7.700L0 17z M9 10.500h11V20L9 18.400z" fill="#fff" /></Svg>
      </button>
      <label className="flex w-[430px] items-center gap-3 border border-[#c9ced0] bg-[#f1f1f1] pl-3.5">
        <Svg w={22} h={22}><circle cx="14" cy="8" r="6.500" stroke="#1c1c1c" strokeWidth="1.600" /><path d="M9.500 12.500L1 21" stroke="#1c1c1c" strokeWidth="1.600" /></Svg>
        <input aria-label="Search" placeholder="Type here to search" className="w-0 flex-1 bg-transparent text-[18px] text-[#333] outline-none placeholder:text-[#333]" />
      </label>
      <button aria-label="Task View" className="flex w-[63px] items-center justify-center">
        <Svg w={22} h={20}><path d="M1 0v3h12V0M1 20v-3h12v3M1 6h12v8H1zM18.500 0v5M18.500 12v8" stroke="#fff" strokeWidth="1.400" /><path d="M17 7h3v3h-3z" fill="#fff" /></Svg>
      </button>
      <div className="flex gap-px">
        {apps.map((a) => (
          <button key={a.name} aria-label={a.name} className={`relative flex w-[61px] items-center justify-center pb-0.5 ${a.state === "active" ? "bg-[#4f6169]" : ""}`}>
            {a.icon}
            {a.state && <span className={`absolute bottom-0 h-[3px] bg-[#76b9ed] ${a.state === "active" ? "inset-x-0" : "inset-x-[5px]"}`} />}
          </button>
        ))}
      </div>
      <div className="flex-1" />
      <div className="flex items-center">
        <button aria-label="Hidden icons" className="mr-3"><Svg w={16} h={10}><path d="M1 9l7-7 7 7" stroke="#fff" strokeWidth="1.500" /></Svg></button>
        <button aria-label="Battery" className="mr-3">
          <Svg w={20} h={16}><path d="M6.500 4.500h12v8h-12z" stroke="#fff" /><path d="M6 6h11v5H8z M19 7h1v3h-1z M0 3h5v4H3v3H2V7H0z M1 1h1v2H1z M3 1h1v2H3z" fill="#fff" /></Svg>
        </button>
        <button aria-label="Network" className="mr-3">
          <Svg w={16} h={16}><path d="M1 15C1 7 7 1 15 1M5 15c0-6 4-10 10-10M9 15c0-3 3-6 6-6" stroke="#c5ccd6" strokeWidth="1.300" /><circle cx="14" cy="14" r="1.800" fill="#fff" /></Svg>
        </button>
        <button aria-label="Volume" className="mr-[13px]">
          <Svg w={21} h={18}><path d="M1 6h3l4-4v14l-4-4H1zM11 6c1 2 1 4 0 6M14 4c2 3 2 7 0 10M17 2c3 4 3 10 0 14" stroke="#fff" strokeWidth="1.300" /></Svg>
        </button>
        <button className="mr-3 text-[14px]">ENG</button>
        <button className="w-[76px] text-center text-[14px] leading-[23px]"><div>10:02 PM</div><div>12/15/2019</div></button>
        <button aria-label="Notifications" className="ml-[18px]">
          <Svg w={22} h={20}><path d="M1 1h20v14h-7l-3 3.500L8 15H1z" stroke="#fff" strokeWidth="1.500" /></Svg>
        </button>
        <div className="mr-[5px] ml-6 h-[51px] w-px bg-[#7a8497]" />
      </div>
    </footer>
  );
}

export default function App() {
  return (
    <div className={`flex h-screen w-full flex-col overflow-hidden bg-[#535353] ${font}`}>
      <div className="flex min-h-0 flex-1 flex-col border-t border-[#3b3b3b]">
        <MenuBar />
        <ControlBar />
        <div className="mx-1.5 flex min-h-0 flex-1 border-y border-[#3b3b3b]">
          <ToolsPanel />
          <Document />
          <RightDock />
        </div>
        <div className="h-1 shrink-0" />
      </div>
      <Taskbar />
    </div>
  );
}
